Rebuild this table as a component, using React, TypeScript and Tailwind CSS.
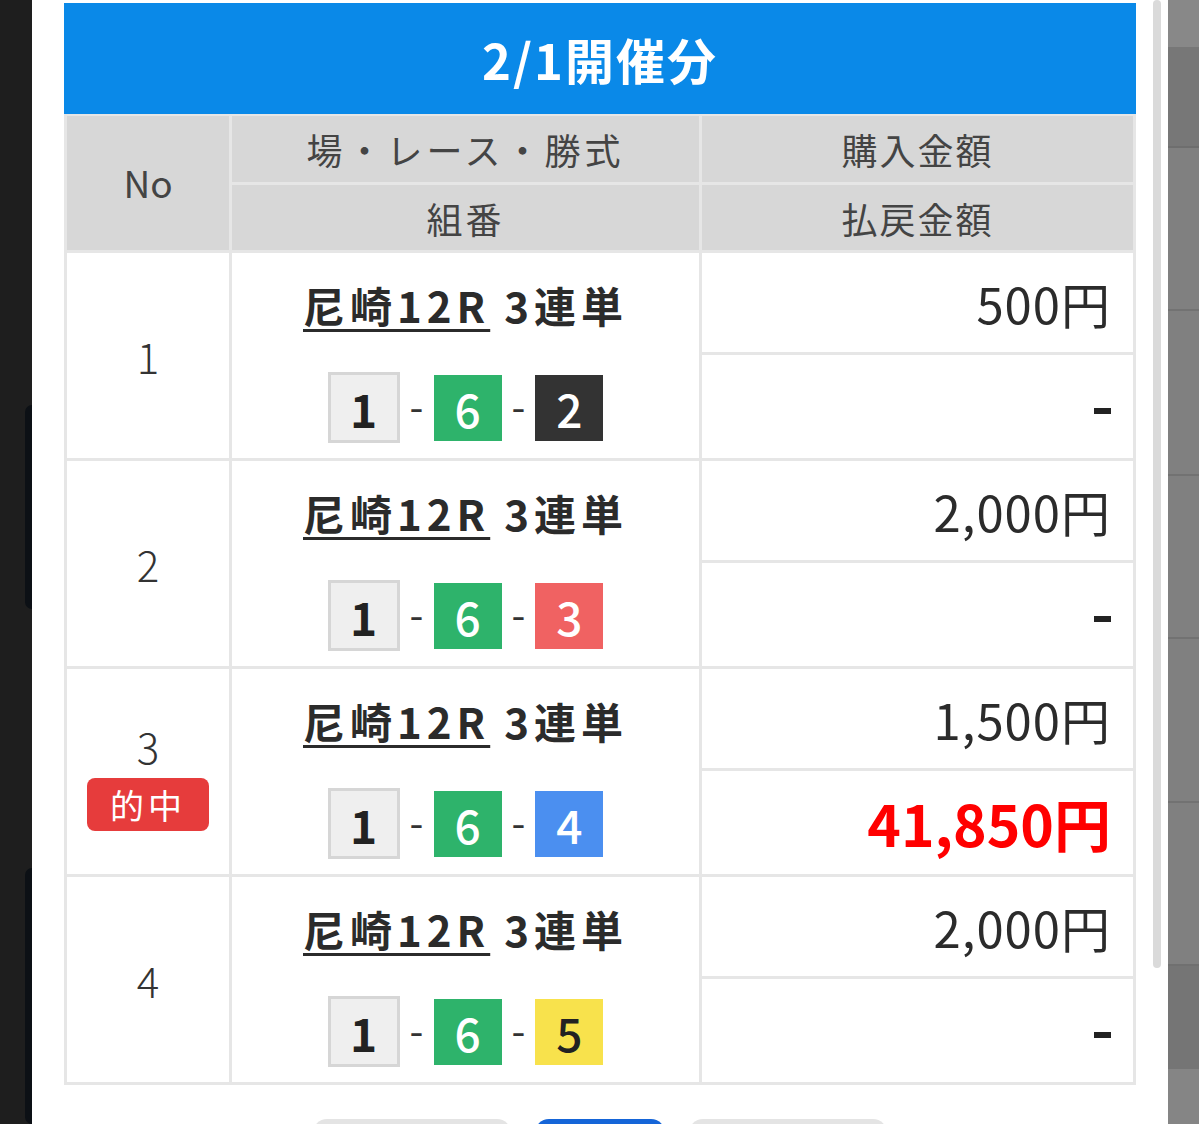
import React from 'react';

type Bet = {
  no: number;
  hit?: boolean;
  combo: [number, number, number];
  amount: string;
  payout: string;
};

const bets: Bet[] = [
  { no: 1, combo: [1, 6, 2], amount: '500円', payout: '-' },
  { no: 2, combo: [1, 6, 3], amount: '2,000円', payout: '-' },
  { no: 3, hit: true, combo: [1, 6, 4], amount: '1,500円', payout: '41,850円' },
  { no: 4, combo: [1, 6, 5], amount: '2,000円', payout: '-' },
];

// boat colours by lane number
const boxStyles: Record<number, string> = {
  1: 'w-[72px] h-[71px] bg-[#efefef] border-[3px] border-[#d6d6d6] text-[#222] font-bold',
  2: 'w-[68px] h-[66px] bg-[#333333] text-white font-medium',
  3: 'w-[68px] h-[66px] bg-[#f06262] text-white font-medium',
  4: 'w-[68px] h-[66px] bg-[#4b8ff0] text-white font-medium',
  5: 'w-[68px] h-[66px] bg-[#f8e24c] text-[#222] font-medium',
  6: 'w-[68px] h-[66px] bg-[#2eb36b] text-white font-medium',
};

function NumBox({ n }: { n: number }) {
  return (
    <div className={`flex items-center justify-center text-[46px] leading-none ${boxStyles[n]}`}>
      {n}
    </div>
  );
}

function Dash() {
  return <span className="text-[40px] leading-none text-[#333] mx-[10px] -mt-[6px]">-</span>;
}

export default function App() {
  return (
    <div
      className="flex w-[1199px] h-[1124px] overflow-hidden bg-white"
      style={{ fontFamily: '"Noto Sans CJK JP", "Noto Sans", sans-serif' }}
    >
      {/* dark backdrop on the left */}
      <div className="w-[32px] shrink-0 bg-[#1e1e1e] flex flex-col items-end">
        <div className="mt-[405px] w-[7px] h-[208px] rounded-l-[8px] bg-[#0c1015]" />
        <div className="mt-[259px] w-[7px] h-[260px] rounded-l-[8px] bg-[#0c1015]" />
      </div>

      {/* modal */}
      <div className="relative w-[1136px] shrink-0 bg-white pl-[32px] pr-[32px] pt-[3px]">
        <div className="h-[111px] bg-[#0a89e8] flex items-center justify-center">
          <h1 className="text-white text-[49px] font-bold tracking-[2px] leading-none">2/1開催分</h1>
        </div>

        <div className="bg-[#e6e6e6] p-[3px] pt-[2px]">
          <div className="grid grid-cols-[162px_467px_431px] grid-rows-[66px_65px_99px_103px_99px_103px_99px_103px_99px_103px] gap-[3px] text-[#444]">
            {/* header */}
            <div className="row-span-2 bg-[#d7d7d7] flex items-center justify-center text-[37px]">No</div>
            <div className="bg-[#d7d7d7] flex items-center justify-center text-[36px] tracking-[4px]">場・レース・勝式</div>
            <div className="bg-[#d7d7d7] flex items-center justify-center text-[36px] tracking-[2px]">購入金額</div>
            <div className="col-start-2 bg-[#d7d7d7] flex items-center justify-center text-[36px] tracking-[3px]">組番</div>
            <div className="bg-[#d7d7d7] flex items-center justify-center text-[36px] tracking-[2px]">払戻金額</div>

            {bets.map(b => (
              <React.Fragment key={b.no}>
                <div className={`row-span-2 col-start-1 bg-white flex flex-col items-center justify-center text-[#333] ${b.hit ? 'pt-[12px]' : ''}`}>
                  <div className="text-[42px] font-light leading-none">{b.no}</div>
                  {b.hit && (
                    <div className="mt-[11px] w-[122px] h-[53px] rounded-[8px] bg-[#e63c3c] text-white text-[34px] tracking-[4px] flex items-center justify-center">
                      的中
                    </div>
                  )}
                </div>
                <div className="row-span-2 col-start-2 bg-white flex flex-col items-center text-[#2b2b2b]">
                  <div className="mt-[31px] text-[42px] font-bold leading-none tracking-[5px] whitespace-nowrap">
                    <span className="underline decoration-[3px] underline-offset-[6px]">尼崎12R</span>
                    <span className="ml-[14px]">3連単</span>
                  </div>
                  <div className="mt-[46px] flex items-center">
                    <NumBox n={b.combo[0]} />
                    <Dash />
                    <NumBox n={b.combo[1]} />
                    <Dash />
                    <NumBox n={b.combo[2]} />
                  </div>
                </div>
                <div className="col-start-3 bg-white flex items-center justify-end pr-[22px] text-[#2b2b2b] text-[49px] tracking-[1px] leading-none">
                  {b.amount}
                </div>
                <div className="col-start-3 bg-white flex items-center justify-end pr-[22px]">
                  {b.payout === '-' ? (
                    <div className="w-[17px] h-[6px] bg-[#222] mt-[8px]" />
                  ) : (
                    <span className="text-[#ff0000] text-[57px] font-bold leading-none">{b.payout}</span>
                  )}
                </div>
              </React.Fragment>
            ))}
          </div>
        </div>

        {/* footer buttons, cut off by the screen */}
        <div className="mt-[34px] flex justify-center gap-[24px]">
          <div className="w-[198px] h-[44px] rounded-[14px] bg-[#e4e4e4]" />
          <div className="w-[130px] h-[44px] rounded-[14px] bg-[#1565d8]" />
          <div className="w-[198px] h-[44px] rounded-[14px] bg-[#e4e4e4]" />
        </div>

        {/* scrollbar */}
        <div className="absolute top-0 right-[7px] w-[8px] h-[968px] rounded-full bg-[#dadada]" />
      </div>

      {/* backdrop on the right */}
      <div className="flex-1 flex flex-col bg-[#808080]">
        <div className="h-[47px] bg-[#888888]" />
        <div className="h-[101px] bg-[#777777] border-b-[2px] border-[#6e6e6e]" />
        <div className="h-[163px] border-b-[2px] border-[#727272]" />
        <div className="h-[165px] border-b-[2px] border-[#727272]" />
        <div className="h-[163px] border-b-[2px] border-[#727272]" />
        <div className="h-[164px] border-b-[2px] border-[#727272]" />
        <div className="h-[163px] border-b-[2px] border-[#707070]" />
        <div className="h-[103px] bg-[#757575]" />
        <div className="flex-1 bg-[#858585]" />
      </div>
    </div>
  );
}
